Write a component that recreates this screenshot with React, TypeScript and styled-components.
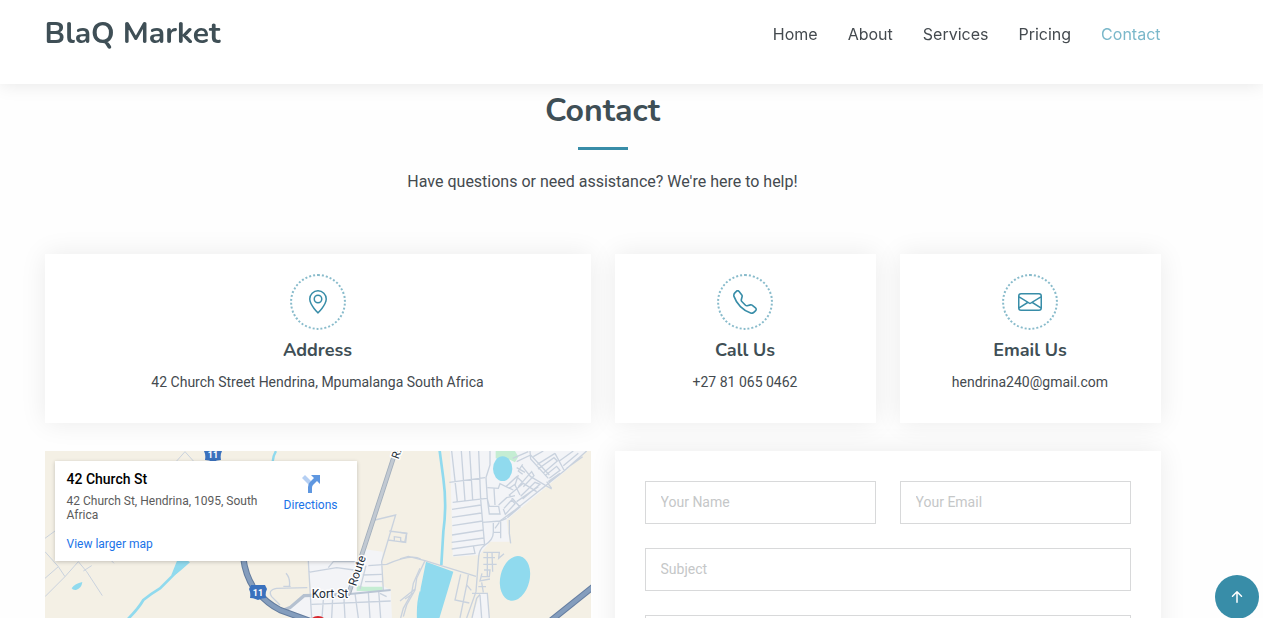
import React from 'react';
import styled, { createGlobalStyle } from 'styled-components';
import { BsArrowUpShort, BsEnvelope, BsGeoAlt, BsTelephone } from 'react-icons/bs';

const heading = `'Nunito', Lato, 'Open Sans', sans-serif`;
const ink = '#3f4f56';
const teal = '#388da8';

const GlobalStyle = createGlobalStyle`
  *, *::before, *::after { box-sizing: border-box; }
  body {
    margin: 0;
    background: #fefefe;
    color: #444a4f;
    font-family: Roboto, sans-serif;
    font-size: 16px;
    line-height: 24px;
  }
  h1, h2, h3, p { margin: 0; }
  a { text-decoration: none; }
`;

const Page = styled.div`
  height: 100vh;
  overflow-y: auto;
  scrollbar-width: none;
`;

const Container = styled.div`
  max-width: 1140px;
  margin: 0 auto;
  padding: 0 12px;
`;

const Header = styled.header`
  position: sticky;
  top: 0;
  z-index: 10;
  height: 84px;
  padding: 12px 58px 0 0;
  background: #fff;
  box-shadow: 0 0 18px rgba(0, 0, 0, 0.1);
`;

const HeaderRow = styled(Container)`
  display: flex;
  align-items: center;
  justify-content: space-between;
  height: 44px;
`;

const Logo = styled.a`
  color: ${ink};
  font: 700 30px/40px ${heading};
`;

const Nav = styled.nav`
  display: flex;
  gap: 30px;
`;

const NavLink = styled.a<{ $active?: boolean }>`
  color: ${(p) => (p.$active ? '#7bb8ca' : '#444a4f')};
  font: 400 16px/24px Inter, sans-serif;
`;

const Main = styled.main`
  padding-right: 58px;
  padding-bottom: 60px;
`;

const SectionTitle = styled.div`
  display: flex;
  flex-direction: column;
  align-items: center;
  padding: 7px 0 60px;
  text-align: center;
`;

const Title = styled.h2`
  color: ${ink};
  font: 700 32px/40px ${heading};
`;

const Rule = styled.span`
  width: 50px;
  height: 3px;
  margin: 16px 0 20px;
  background: ${teal};
`;

const Grid = styled.div`
  display: grid;
  grid-template-columns: repeat(12, 1fr);
  gap: 28px 24px;
`;

const Panel = styled.div<{ $span: number }>`
  grid-column: span ${(p) => p.$span};
  min-width: 0;
  background: #fff;
  box-shadow: 0 0 25px rgba(0, 0, 0, 0.08);
`;

const InfoCard = styled(Panel)`
  display: flex;
  flex-direction: column;
  align-items: center;
  padding: 20px 20px 30px;
  text-align: center;
`;

const IconRing = styled.span`
  display: flex;
  align-items: center;
  justify-content: center;
  width: 56px;
  height: 56px;
  border: 2px dotted #88bbcb;
  border-radius: 50%;
  color: ${teal};
  font-size: 24px;
`;

const InfoTitle = styled.h3`
  margin: 9px 0 11px;
  color: ${ink};
  font: 700 18px/22px ${heading};
`;

const InfoText = styled.p`
  font-size: 14px;
  line-height: 21px;
`;

const MapFrame = styled.div`
  position: relative;
  grid-column: span 6;
  overflow: hidden;
  background: #f4f0e5;
`;

const MapDrawing = styled.svg`
  display: block;
  width: 100%;
  height: auto;
  font-family: Roboto, sans-serif;
`;

const PlaceCard = styled.div`
  position: absolute;
  top: 10px;
  left: 10px;
  display: flex;
  justify-content: space-between;
  width: 302px;
  padding: 9px 19px 9px 12px;
  background: #fff;
  box-shadow: 0 1px 4px rgba(0, 0, 0, 0.2);
  font-size: 12px;
  line-height: 16px;
`;

const PlaceText = styled.div`
  width: 200px;
`;

const PlaceName = styled.h3`
  color: #000;
  font-size: 14px;
  font-weight: 500;
  line-height: 18px;
`;

const PlaceAddress = styled.p`
  margin: 6px 0 14px;
  color: #5b5b5b;
  line-height: 14px;
`;

const MapLink = styled.a`
  display: block;
  color: #1a73e8;
`;

const Directions = styled(MapLink)`
  display: flex;
  flex-direction: column;
  align-items: center;
  gap: 4px;
  margin-top: 5px;
`;

const FormPanel = styled(Panel)`
  padding: 30px;
`;

const Form = styled.form`
  display: grid;
  grid-template-columns: 1fr 1fr;
  gap: 24px;
`;

const Field = styled.input<{ $wide?: boolean }>`
  grid-column: ${(p) => (p.$wide ? '1 / -1' : 'auto')};
  min-width: 0;
  padding: 10px 15px;
  border: 1px solid #d8d9da;
  border-radius: 0;
  background: #fff;
  color: #444a4f;
  font: 400 14px/21px Roboto, sans-serif;
  &::placeholder { color: #c5c7c8; opacity: 1; }
`;

const Send = styled.button`
  grid-column: 1 / -1;
  justify-self: center;
  padding: 10px 30px;
  border: 0;
  background: ${teal};
  color: #fff;
  font: 400 16px/24px Roboto, sans-serif;
`;

const ScrollTop = styled.button`
  position: fixed;
  right: 4px;
  bottom: -1px;
  z-index: 20;
  display: flex;
  align-items: center;
  justify-content: center;
  width: 44px;
  height: 44px;
  padding: 0;
  border: 0;
  border-radius: 50%;
  background: ${teal};
  color: #fff;
  font-size: 24px;
`;

const links = ['Home', 'About', 'Services', 'Pricing', 'Contact'];

const cards = [
  { span: 6, icon: <BsGeoAlt />, title: 'Address', text: '42 Church Street Hendrina, Mpumalanga South Africa' },
  { span: 3, icon: <BsTelephone />, title: 'Call Us', text: '+27 81 065 0462' },
  { span: 3, icon: <BsEnvelope />, title: 'Email Us', text: 'hendrina240@gmail.com' },
];

const water = '#90daee';
const urban = '#f3f4f7';
const street = '#c9d2de';

function Shield({ x, y }: { x: number; y: number }) {
  return (
    <g transform={`translate(${x} ${y})`}>
      <path d="M-7-7H7L9-3Q7 1 8 6Q4 6 0 8Q-4 6-8 6Q-7 1-9-3Z" fill="#3a71bd" />
      <text y="4" textAnchor="middle" fill="#fff" fontSize="9" fontWeight="700">11</text>
    </g>
  );
}

function TownMap() {
  return (
    <MapDrawing viewBox="0 0 546 400" aria-hidden="true">
      {/* west side: farm tracks and stream */}
      <g transform="translate(-5 -6) scale(.3333)" fill="none" stroke={street} strokeWidth="3">
        <path d="M410 48L435 20L462 50M15 280L45 258M15 320L55 365L75 395M15 455L75 395L115 350L140 380L187 452M15 400L55 365M130 378L155 362M212 345L222 355" />
        <path d="M435 355Q395 395 360 430Q330 448 310 465Q296 490 262 524" stroke={water} strokeWidth="8" />
        <path d="M394 390L412 345H440L450 352Q425 375 408 388ZM95 430Q105 415 127 411Q125 430 108 435Q98 436 95 430Z" fill={water} stroke="none" />
      </g>

      {/* town centre */}
      <g transform="translate(185 -6) scale(.3333)" fill="none" stroke={street} strokeWidth="4">
        <path d="M232 348L300 345H380L400 312L458 320L454 420L482 435L490 600H220L170 495L220 455L245 448Z" fill={urban} stroke="none" />
        <path d="M380 420L400 425H458V438H380Z" fill="#c5edd3" stroke="none" />
        <path d="M138 18Q130 30 128 50" stroke={water} strokeWidth="7" />
        <path d="M572 440Q560 480 565 540" stroke={water} strokeWidth="6" />
        <path d="M435 225L497 210L470 300L455 350L460 435M478 258L530 265L524 292L474 285M493 288V275L512 278V292M415 362L470 358Q545 325 572 342M570 370L550 415L545 445L520 490L512 519M550 445L525 462M235 348L245 519M235 382L320 368L372 375M168 385Q182 400 178 425M160 424H182M232 428L140 430Q112 435 125 455L150 480M398 390L455 388M405 410H458M295 368L310 350H375M408 362L390 432M280 465L276 519M308 460L305 519M342 462L345 519M375 445L385 519M415 440L420 519M446 437L452 519M245 478L482 468M450 445L470 455" />
        <path d="M150 500L180 488L222 452L360 448" stroke="#b5c1d0" strokeWidth="10" />
        <path d="M360 447L482 435" stroke="#b9c5d4" strokeWidth="6" />
        <path d="M503 0L398 322L356 446" stroke="#a2aebb" strokeWidth="14" />
        <path d="M503 0L398 322L356 446" stroke="#c1c9d2" strokeWidth="9" />
        <path d="M40 340Q46 390 72 430Q110 475 150 495L240 528" stroke="#627b9d" strokeWidth="19" />
        <path d="M40 340Q46 390 72 430Q110 475 150 495L240 528" stroke="#849dbd" strokeWidth="13" />
      </g>

      {/* eastern suburbs and lakes */}
      <g transform="translate(355 -6) scale(.3333)" fill="none" stroke={street} strokeWidth="4">
        <path d="M150 18H558L500 75L320 225L328 290L270 290L238 330L158 335Z" fill={urban} stroke="none" />
        <path d="M240 448L262 445L275 600H190L216 519Z" fill={urban} stroke="none" />
        <path d="M287 18H345L355 35L345 52L330 44L287 40Z" fill="#c5edd3" stroke="none" />
        <path d="M118 10L130 100Q141 180 130 260L124 360" stroke={water} strokeWidth="8" />
        <path d="M78 350L160 380L142 440L112 540H50L62 430Z" fill={water} stroke="none" />
        <path d="M148 112L255 98M158 172L260 160M156 193L243 180M156 217L244 204M157 242L248 228M156 270L251 255M155 292L252 279M155 312L253 298M160 332L225 325L220 302M155 18L172 170M184 18L195 168M209 18L218 165M236 18L242 163L254 302M270 18V60L258 98L262 162M247 232L300 228L320 220M280 234V262Q280 285 255 300Q238 312 236 335L228 440L200 519M302 230V280M282 262H302M285 250L298 232M328 225V265L332 295" />
        <path d="M262 128L295 130L300 116L328 130L345 118M262 162L268 184H296L300 207H268L262 162M282 130L285 180M296 180L320 158L345 152M312 190L335 165L345 176L316 208L310 192M300 228L345 195L492 78L560 18M322 218L360 186L328 150L370 115L410 140M350 170L415 125M362 154L405 112L420 118L368 162M340 135L318 125L350 95L368 112M355 125L395 80L402 92L370 125M365 62L392 95L455 132M350 50L392 30L448 90M338 40L385 20M390 18L392 42L445 100M400 35L430 18M412 58L465 25M414 72L462 38L472 48L430 84M435 92L470 64L480 76L448 100M465 25L492 75M478 48L520 18M490 62L535 25M500 70L548 35M445 110L480 85M425 132L450 112M440 110L455 130M355 90L345 120L360 150M350 68L375 82M368 58L355 78L368 88" />
        <ellipse cx="308" cy="71" rx="29" ry="37" fill={water} stroke="none" />
        <ellipse cx="345" cy="400" rx="44" ry="68" transform="rotate(13 345 400)" fill={water} stroke="none" />
        <path d="M250 322H298L296 340L312 326M250 338H285M250 358H290M252 375H270L268 395H246M262 320V395M276 320L278 380M246 385L240 408L270 402M235 425H258M245 412L250 442M0 342L25 334L75 347L228 394M75 347L50 400L45 435L20 480L10 515M45 432L0 468M0 262L20 265L17 292L0 288M182 388L165 465L208 474M205 390L200 420L180 519M200 420L214 436M216 445H262L268 519M240 450L245 519M216 519L230 460L240 448" />
        <path d="M580 425L450 529" stroke="#647da0" strokeWidth="19" />
        <path d="M580 425L450 529" stroke="#849dbd" strokeWidth="13" />
      </g>

      <Shield x={168} y={3} />
      <Shield x={213} y={141} />
      <circle cx="273" cy="175" r="10" fill="#d7262d" />
      <g fill="#222b36" stroke="#fff" strokeWidth="3" strokeLinejoin="round" paintOrder="stroke" fontSize="11" textAnchor="middle">
        <text x="285" y="147" fontSize="12">Kort St</text>
        <text transform="translate(316 121) rotate(-71)" fontSize="12">Route</text>
        <text transform="translate(355 4) rotate(-71)">R.</text>
      </g>
    </MapDrawing>
  );
}

export default function App() {
  return (
    <Page>
      <GlobalStyle />
      <Header>
        <HeaderRow>
          <Logo href="#home">BlaQ Market</Logo>
          <Nav>
            {links.map((l) => (
              <NavLink key={l} href={`#${l.toLowerCase()}`} $active={l === 'Contact'}>{l}</NavLink>
            ))}
          </Nav>
        </HeaderRow>
      </Header>
      <Main>
        <Container>
          <SectionTitle>
            <Title>Contact</Title>
            <Rule />
            <p>Have questions or need assistance? We're here to help!</p>
          </SectionTitle>
          <Grid>
            {cards.map((c) => (
              <InfoCard key={c.title} $span={c.span}>
                <IconRing>{c.icon}</IconRing>
                <InfoTitle>{c.title}</InfoTitle>
                <InfoText>{c.text}</InfoText>
              </InfoCard>
            ))}
            <MapFrame>
              <TownMap />
              <PlaceCard>
                <PlaceText>
                  <PlaceName>42 Church St</PlaceName>
                  <PlaceAddress>42 Church St, Hendrina, 1095, South Africa</PlaceAddress>
                  <MapLink href="#map">View larger map</MapLink>
                </PlaceText>
                <Directions href="#directions">
                  <svg width="18" height="18" viewBox="0 0 18 18" aria-hidden="true">
                    <path d="M0 3L3 0L9 6L7 10Z" fill="#b5cff3" />
                    <path d="M6 18V12Q6 9 8 7L12 3L9 0H18V9L15 6L11 10Q10 11 10 13V18Z" fill="#5f97e0" />
                  </svg>
                  Directions
                </Directions>
              </PlaceCard>
            </MapFrame>
            <FormPanel $span={6}>
              <Form>
                <Field aria-label="Your Name" placeholder="Your Name" />
                <Field type="email" aria-label="Your Email" placeholder="Your Email" />
                <Field $wide aria-label="Subject" placeholder="Subject" />
                <Field as="textarea" $wide rows={6} aria-label="Message" />
                <Send type="button">Send Message</Send>
              </Form>
            </FormPanel>
          </Grid>
        </Container>
      </Main>
      <ScrollTop type="button" aria-label="Back to top"><BsArrowUpShort /></ScrollTop>
    </Page>
  );
}
